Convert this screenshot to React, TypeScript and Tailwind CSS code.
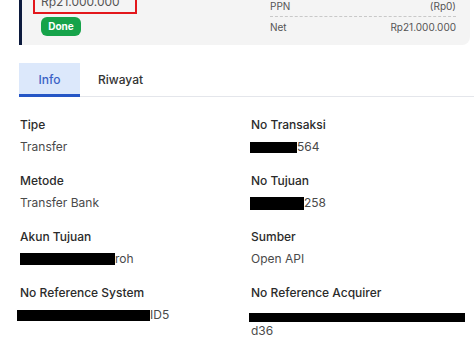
import React from 'react';

/* ─── Static data ─────────────────────────────────────────────── */

type Field = {
  label: string;
  value: string;
  mask?: number;
  maskH?: number;
  maskShift?: number;
};

const LEFT: Field[] = [
  { label: 'Tipe', value: 'Transfer' },
  { label: 'Metode', value: 'Transfer Bank' },
  { label: 'Akun Tujuan', value: 'roh', mask: 95, maskH: 12 },
  { label: 'No Reference System', value: 'ID5', mask: 133, maskH: 11, maskShift: 3 },
];

const RIGHT: Field[] = [
  { label: 'No Transaksi', value: '564', mask: 47, maskH: 11, maskShift: 1 },
  { label: 'No Tujuan', value: '258', mask: 54, maskH: 13, maskShift: 1 },
  { label: 'Sumber', value: 'Open API' },
];

/* ─── Pieces ─────────────────────────────────────────────────── */

function Masked({ mask, h, shift, text }: { mask: number; h: number; shift?: number; text: string }) {
  return (
    <div className="flex items-center h-4">
      <span
        className="inline-block bg-black"
        style={{ width: mask, height: h, marginLeft: shift ? -shift : 0 }}
      />
      <span>{text}</span>
    </div>
  );
}

function InfoField({ f }: { f: Field }) {
  return (
    <div className="flex flex-col gap-[6px]">
      <div className="text-[12px] leading-4 font-medium text-[#2b2b2b]">{f.label}</div>
      <div className="text-[12px] leading-4 text-[#4a4a4a]">
        {f.mask ? <Masked mask={f.mask} h={f.maskH ?? 12} shift={f.maskShift} text={f.value} /> : f.value}
      </div>
    </div>
  );
}

/* ─── Component ──────────────────────────────────────────────── */

export default function App() {
  return (
    <div className="w-[474px] h-[356px] overflow-hidden bg-white" style={{ fontFamily: 'Inter, "Noto Sans", sans-serif' }}>
      <div className="-mt-[40px]">
        {/* Summary card */}
        <div className="ml-[19px] mr-[4px] flex items-start border-l-[3px] border-[#0c1a3d] bg-[#f4f4f4] rounded-r-lg">
          <div className="pl-[11px] pt-[12px] pb-[9px] flex flex-col items-start">
            <div className="text-[12px] leading-4 text-[#666] pl-[8px] mb-[4px]">Nominal Transaksi</div>
            <div className="border-2 border-[#e3171c] px-[6px] pr-[15px] pb-[2px] text-[12px] leading-4 text-[#555]">
              Rp21.000.000
            </div>
            <div className="ml-[8px] mt-[3px] h-[19px] w-[40px] rounded-[6px] bg-[#16a34a] text-white text-[10px] font-bold flex items-center justify-center">
              Done
            </div>
          </div>

          <div className="ml-auto mr-[14px] w-[186px] pt-[15px] pb-[7px] text-[10px] leading-3 text-[#555]">
            <div className="flex justify-between py-[4px] border-b border-dashed border-[#c8c8c8]">
              <span>Nominal</span>
              <span>Rp21.000.000</span>
            </div>
            <div className="flex justify-between py-[4px] border-b border-dashed border-[#c8c8c8]">
              <span>PPN</span>
              <span>(Rp0)</span>
            </div>
            <div className="flex justify-between py-[4px]">
              <span>Net</span>
              <span>Rp21.000.000</span>
            </div>
          </div>
        </div>

        {/* Tabs */}
        <div className="ml-[19px] mt-[18px] flex border-b border-[#e4e6eb]">
          <button className="-mb-px h-[34px] w-[61px] bg-[#dce8fb] border-b-[3px] border-[#2556c6] text-[12px] font-medium text-[#3b62c6] pt-[2px]">
            Info
          </button>
          <button className="-mb-px h-[34px] px-[18px] text-[12px] font-medium text-[#333] pb-[1px]">
            Riwayat
          </button>
        </div>

        {/* Detail grid */}
        <div className="grid grid-cols-[231px_1fr] pl-[20px] pt-[20px]">
          <div className="flex flex-col gap-[18px]">
            {LEFT.map((f) => (
              <InfoField key={f.label} f={f} />
            ))}
          </div>
          <div className="flex flex-col gap-[18px]">
            {RIGHT.map((f) => (
              <InfoField key={f.label} f={f} />
            ))}
            <div className="flex flex-col gap-[6px]">
              <div className="text-[12px] leading-4 font-medium text-[#2b2b2b]">No Reference Acquirer</div>
              <div className="text-[12px] leading-4 text-[#4a4a4a]">
                <div className="h-4 flex items-end pb-[1px]">
                  <span className="block h-[9px] w-[216px] -ml-[2px] bg-black" />
                </div>
                <div>d36</div>
              </div>
            </div>
          </div>
        </div>
      </div>
    </div>
  );
}
